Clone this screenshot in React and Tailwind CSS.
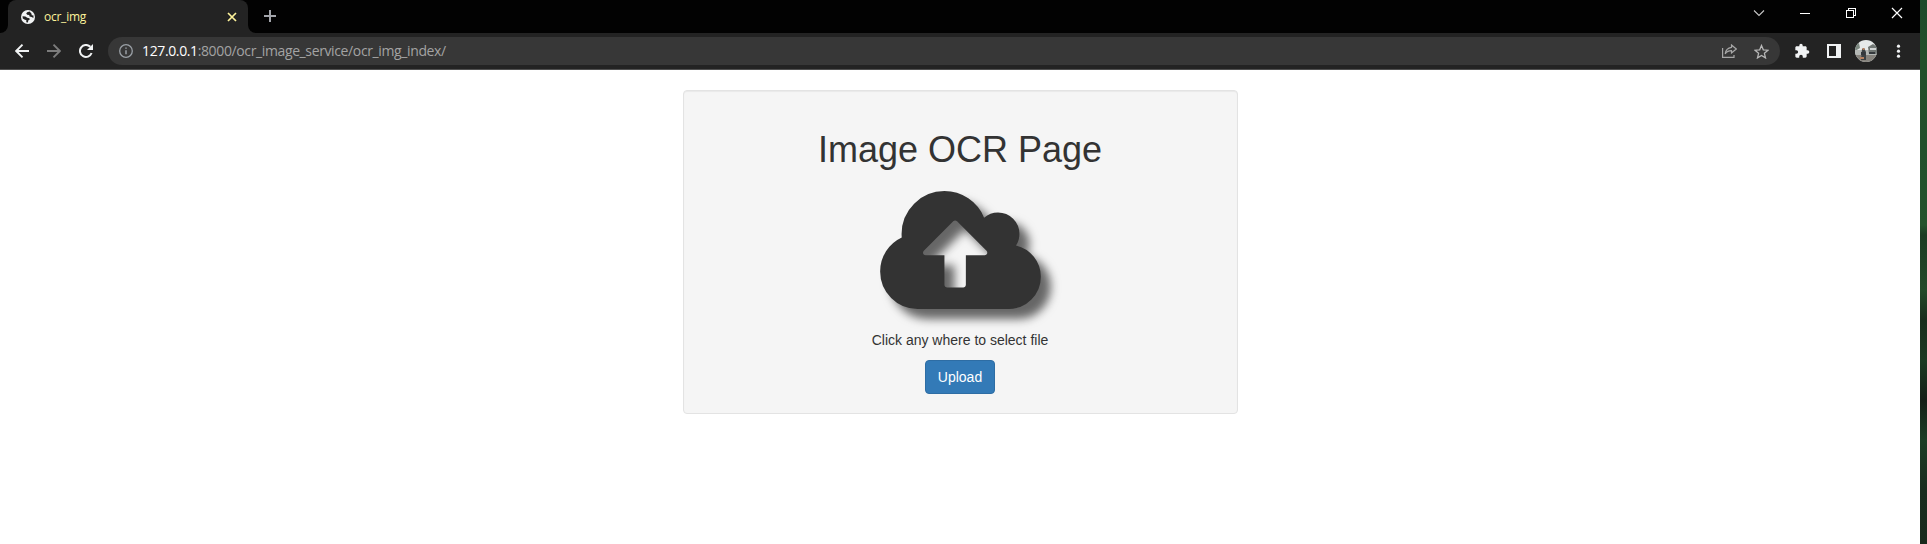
import React from "react";

const CLOUD =
  "M1280 928q0-14-9-23l-352-352q-9-9-23-9t-23 9L522 904q-10 12-10 24 0 14 9 23t23 9h224v352q0 13 9.5 22.5t22.5 9.5h192q13 0 22.5-9.5t9.5-22.5V960h224q13 0 22.5-9.5t9.5-22.5zm640 288q0 159-112.5 271.5T1536 1600H448q-185 0-316.5-131.5T0 1152q0-130 70-240t188-165q-2-30-2-43 0-212 150-362t362-150q156 0 285.5 87T1242 510q71-62 166-62 106 0 181 75t75 181q0 76-41 138 130 31 213.5 135.5T1920 1216z";

function Globe() {
  return (
    <svg className="size-[14px]" viewBox="0 0 14 14">
      <circle cx="7" cy="7" r="7" fill="#f1f3f4" />
      <path d="M1.500 6.200 4.400 6.400 6.200 7.800 8.400 8.200 8.800 9.600 7.200 10.600 7 12.500 5.200 12.200 5.400 10.200 3.400 9.600 1.800 8.600zM8.600 1.600 6.200 2.200 5.200 3.600 6.200 4.800 8.200 5 8.600 6.600 10.600 7 12.400 8 12.500 5.600 10.800 5.200 10.400 3.600z" fill="#222" />
    </svg>
  );
}

function TabStrip() {
  return (
    <div className="flex h-[33px] bg-[#020202]">
      <div className="flex w-2 items-end bg-[#232323]">
        <div className="h-full w-full rounded-br-[8px] bg-[#020202]" />
      </div>
      <div className="flex w-[240px] items-center bg-[#020202]">
        <div className="flex h-full w-full items-center rounded-t-[8px] bg-[#232323] pr-[11px] pl-[13px]">
          <Globe />
          <span className="ml-[9px] text-[12px] leading-4 tracking-[-0.25px] text-[#fdf39b]">ocr_img</span>
          <svg className="ml-auto size-[10px]" viewBox="0 0 10 10" stroke="#fdf39b" strokeWidth="1.7">
            <path d="M1 1l8 8M9 1l-8 8" />
          </svg>
        </div>
      </div>
      <div className="flex w-2 bg-[#232323]">
        <div className="h-full w-full rounded-bl-[8px] bg-[#020202]" />
      </div>
      <svg className="mt-[10px] ml-2 size-3" viewBox="0 0 12 12" stroke="#a3a5ab" strokeWidth="2">
        <path d="M6 0v12M0 6h12" />
      </svg>
      <div className="ml-auto flex h-[26px] items-center text-white">
        <svg className="size-[46px]" viewBox="0 0 46 46" fill="none" stroke="#c8c8c8" strokeWidth="1.1">
          <path d="M18 20.500l5 5 5-5" />
        </svg>
        <svg className="size-[46px]" viewBox="0 0 46 46" stroke="white" shapeRendering="crispEdges">
          <path d="M18 23.500h10" />
        </svg>
        <svg className="size-[46px]" viewBox="0 0 46 46" fill="none" stroke="white" shapeRendering="crispEdges">
          <path d="M18.500 20.500h7v7h-7zM20.500 20v-1.500h7v7H26" />
        </svg>
        <svg className="size-[46px]" viewBox="0 0 46 46" stroke="white" strokeWidth="1.2">
          <path d="M18 18l10 10M28 18l-10 10" />
        </svg>
      </div>
    </div>
  );
}

function Arrow({ className, color }) {
  return (
    <svg className={className} viewBox="0 0 14 14" fill="none" stroke={color} strokeWidth="1.9">
      <path d="M14 7H1.500M7.500.7 1.200 7l6.300 6.300" />
    </svg>
  );
}

function Avatar() {
  return (
    <svg className="ml-[14px] size-[22px]" viewBox="0 0 22 22">
      <clipPath id="face">
        <circle cx="11" cy="11" r="11" />
      </clipPath>
      <g clipPath="url(#face)">
        <path fill="#e6e9e9" d="M0 0h22v22H0z" />
        <path fill="#7c8880" d="M0 4l4-1 1 5-5 3z" />
        <path fill="#b4b8b5" d="M0 10h22v5H0z" />
        <path fill="#707673" d="M13 7l5-3 4 3v7h-8z" />
        <path fill="#d0d3d3" d="M15 8h6v2h-6z" />
        <path fill="#85827c" d="M0 15h22v7H0z" />
        <path fill="#3c4144" d="M7 9l2-1 2 4v8H6z" />
        <path fill="#b5805f" d="M7.500 8h2v2h-2zM5 17h4v2H5z" />
        <path fill="#34383c" d="M6 12h4v3H6zM14 12h6v2h-6z" />
      </g>
    </svg>
  );
}

function Toolbar() {
  return (
    <div className="flex h-[36px] items-center bg-[#232323] pl-[15px]">
      <Arrow className="size-[14px]" color="#f1f3f4" />
      <Arrow className="ml-[18px] size-[14px] -scale-x-100" color="#7c7c7c" />
      <svg className="ml-[18px] size-[14px]" viewBox="0 0 14 14">
        <path d="M12.600 9A6 6 0 1 1 11.300 2.800" fill="none" stroke="#f1f3f4" strokeWidth="2" />
        <path d="M14 0v6H8z" fill="#f1f3f4" />
      </svg>
      <div className="ml-[15px] flex h-7 w-[1672px] items-center rounded-full bg-[#373737] pr-[11px] pl-[11px]">
        <svg className="size-[14px]" viewBox="0 0 14 14" fill="none" stroke="#9aa0a6" strokeWidth="1.3">
          <circle cx="7" cy="7" r="6.300" />
          <path d="M7 6.200v4M7 3.400v1.400" strokeWidth="1.500" />
        </svg>
        <span className="ml-[9px] text-[14px] leading-5 tracking-[-0.375px] text-[#a3a3a3]">
          <span className="text-white">127.0.0.1</span>:8000/ocr_image_service/ocr_img_index/
        </span>
        <svg className="ml-auto h-[14px] w-[15px]" viewBox="0 0 15 14" fill="none" stroke="#a7a7a7" strokeWidth="1.200">
          <path d="M.6 4v9.400h11.400V11M9.500 1l4.800 4-4.800 4V6.700C6.500 6.700 4.800 7.500 3.200 9.800 3.600 6.500 5.800 3.800 9.500 3.300z" />
        </svg>
        <svg className="ml-[17px] size-[15px]" viewBox="0 0 15 15" fill="none" stroke="#b7b7b7" strokeWidth="1.300">
          <path d="M7.500 1.500l1.800 4.300 4.700.4-3.600 3.100 1.100 4.600-4-2.500-4 2.500 1.100-4.600L1 6.200l4.700-.4z" />
        </svg>
      </div>
      <svg className="ml-[14px] size-4" viewBox="0 0 24 24" fill="#f1f3f4">
        <path d="M20.500 11H19V7c0-1.100-.9-2-2-2h-4V3.500a2.500 2.500 0 0 0-5 0V5H4c-1.100 0-2 .9-2 2v3.800h1.500a2.700 2.700 0 0 1 0 5.400H2V20c0 1.100.9 2 2 2h3.800v-1.500a2.700 2.700 0 0 1 5.400 0V22H17c1.100 0 2-.9 2-2v-4h1.500a2.500 2.500 0 0 0 0-5z" />
      </svg>
      <svg className="ml-[17px] size-[14px]" viewBox="0 0 14 14" shapeRendering="crispEdges">
        <path fill="#f1f3f4" fillRule="evenodd" d="M0 0h14v14H0zM2 2v10h7V2z" />
      </svg>
      <Avatar />
      <svg className="ml-[19px] h-[14px] w-[5px]" viewBox="0 0 5 14" fill="#f1f3f4">
        <circle cx="2.500" cy="2.200" r="1.600" />
        <circle cx="2.500" cy="7.200" r="1.600" />
        <circle cx="2.500" cy="12.200" r="1.600" />
      </svg>
    </div>
  );
}

function UploadCard() {
  return (
    <div className="mt-5 flex h-[324px] w-[555px] flex-col items-center rounded-[4px] border border-[#e3e3e3] bg-[#f5f5f5] pt-[39px] text-[14px] leading-5 text-[#333] shadow-[inset_0_1px_1px_rgba(0,0,0,0.05)]">
      <h1 className="text-[36px] leading-10 font-medium">Image OCR Page</h1>
      <svg
        className="mt-[5px] h-[150px] w-[161px] overflow-visible drop-shadow-[10px_10px_5px_#666]"
        viewBox="0 0 1920 1792"
        fill="#333"
      >
        <path fillRule="evenodd" d={CLOUD} />
      </svg>
      <p className="mt-[5px]">Click any where to select file</p>
      <button className="mt-[10px] h-[34px] w-[70px] rounded-[4px] border border-[#2e6da4] bg-[#337ab7] text-white">
        Upload
      </button>
    </div>
  );
}

function Wallpaper() {
  return (
    <div className="h-full w-[7px] overflow-hidden bg-[linear-gradient(180deg,#1d4a2b_0px,#22502a_60px,#21502b_150px,#24522b_225px,#1c3b22_235px,#234a29_290px,#182d1c_320px,#1b3a22_360px,#151f17_400px,#1c3d25_440px,#192c1e_490px,#182a1c_544px)]" />
  );
}

export default function App() {
  return (
    <div className="flex h-[544px] w-[1927px] overflow-hidden font-['Liberation_Sans',Arial,sans-serif]">
      <div className="flex w-[1920px] flex-col bg-white">
        <header className="border-b border-[#505050] font-['Open_Sans','Noto_Sans',sans-serif]">
          <TabStrip />
          <Toolbar />
        </header>
        <main className="flex flex-1 justify-center">
          <UploadCard />
        </main>
      </div>
      <Wallpaper />
    </div>
  );
}
